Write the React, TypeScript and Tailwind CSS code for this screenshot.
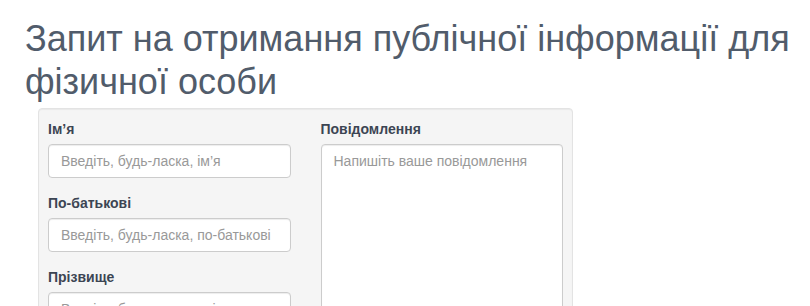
import type { ReactNode } from 'react';

const fieldClass =
  'block h-[34px] w-full rounded-[4px] border border-[#cccccc] bg-white px-3 text-[14px] text-[#555555] shadow-[inset_0_1px_1px_rgba(0,0,0,0.075)] outline-none placeholder:text-[#999999]';

function Field({ label, children }: { label: string; children: ReactNode }) {
  return (
    <div className="mb-[15px]">
      <label className="mb-[5px] block text-[14px] font-bold leading-[20px] text-[#3c4553]">{label}</label>
      {children}
    </div>
  );
}

export default function App() {
  return (
    <div className="h-[306px] overflow-hidden bg-white px-[25px] pt-[17px] font-['Liberation_Sans',Arial,sans-serif]">
      <h1 className="mb-[5px] whitespace-nowrap text-[36px] font-normal leading-[43px] text-[#515c6b]">
        Запит на отримання публічної інформації для
        <br />
        фізичної особи
      </h1>
      <div className="ml-[13px] w-[535px] rounded-[4px] border border-[#e3e3e3] bg-[#f5f5f5] px-[9px] pt-[10px] shadow-[inset_0_1px_1px_rgba(0,0,0,0.05)]">
        <div className="grid grid-cols-2 gap-[30px]">
          <div>
            <Field label="Ім’я">
              <input className={fieldClass} placeholder="Введіть, будь-ласка, ім’я" />
            </Field>
            <Field label="По-батькові">
              <input className={fieldClass} placeholder="Введіть, будь-ласка, по-батькові" />
            </Field>
            <Field label="Прізвище">
              <input className={fieldClass} placeholder="Введіть, будь-ласка, прізвище" />
            </Field>
          </div>
          <div>
            <Field label="Повідомлення">
              <textarea
                className="block h-[200px] w-full resize-none rounded-[4px] border border-[#cccccc] bg-white px-3 py-[6px] text-[14px] leading-[20px] text-[#555555] shadow-[inset_0_1px_1px_rgba(0,0,0,0.075)] outline-none placeholder:text-[#999999]"
                placeholder="Напишіть ваше повідомлення"
              />
            </Field>
          </div>
        </div>
      </div>
    </div>
  );
}
